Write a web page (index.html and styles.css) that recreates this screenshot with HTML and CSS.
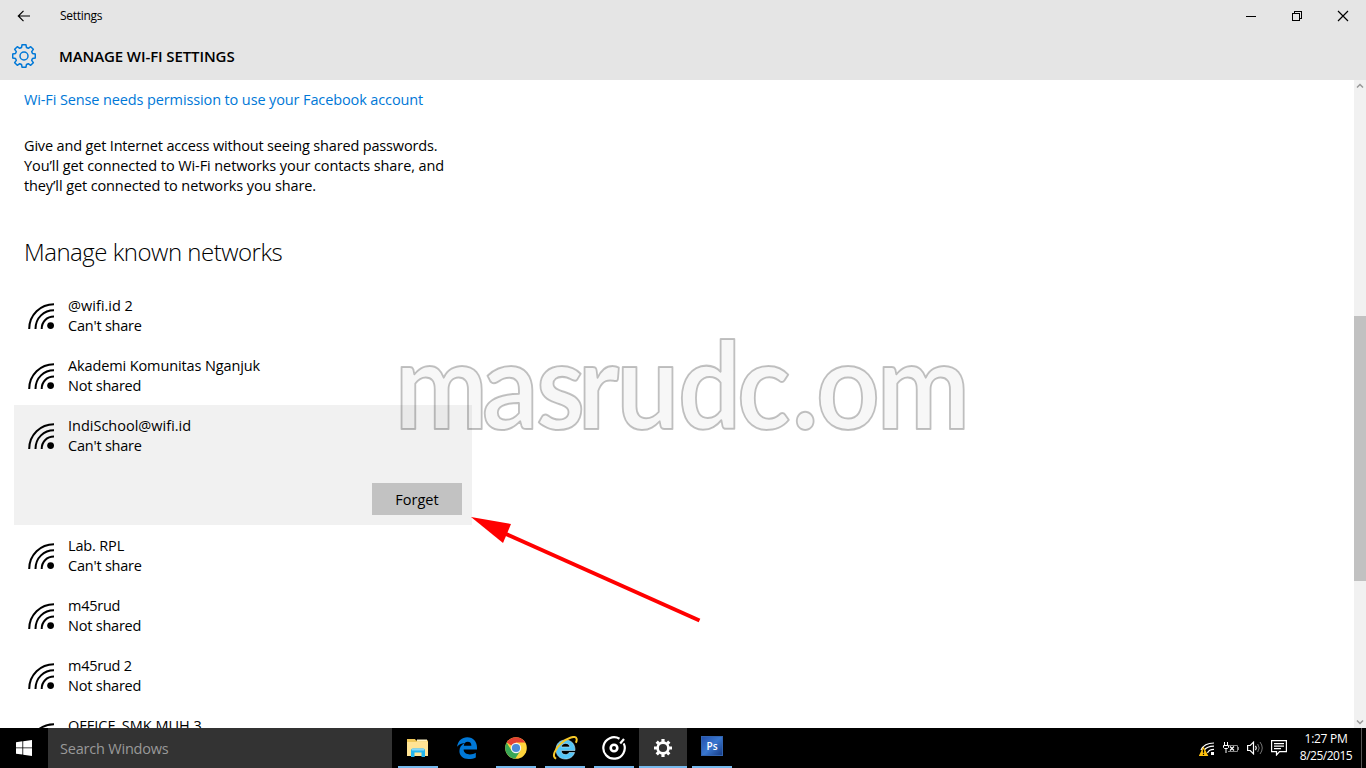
FILE: index.html
```html
<!DOCTYPE html>
<html lang="en">
<head>
<meta charset="utf-8">
<title>Settings</title>
<link rel="stylesheet" href="styles.css">
</head>
<body>
<svg width="0" height="0" class="defs">
  <defs>
    <symbol id="wifi" viewBox="0 0 28 28">
      <g fill="none" stroke="#000" stroke-width="2"><path d="M1.2 27C1.2 12.6 12.6 2.2 26 2.2M7.5 27C7.5 15.6 16 8.3 26 8.3M13.7 27C13.7 19.4 19 14.6 26 14.6"/></g>
      <circle cx="22.6" cy="23.6" r="3.4"/>
    </symbol>
  </defs>
</svg>
<div class="screen">
  <header class="header">
    <div class="titlebar">
      <svg class="back" width="14" height="12" viewBox="0 0 14 12"><path d="M6.5 .8 1.3 6l5.2 5.2M1.3 6H13" fill="none" stroke="#000" stroke-width="1.2"/></svg>
      <span class="app-name">Settings</span>
      <div class="controls">
        <svg width="46" height="32" shape-rendering="crispEdges"><path d="M18 16.5h10" stroke="#000"/></svg>
        <svg width="46" height="32" shape-rendering="crispEdges"><path d="M18.5 13.5h7v7h-7zM20.500 13v-1.500h7v7H26" fill="none" stroke="#000"/></svg>
        <svg width="46" height="32"><path d="m18 11 10 10M28 11 18 21" stroke="#000" stroke-width="1.2"/></svg>
      </div>
    </div>
    <div class="page-title">
      <svg width="24" height="24" viewBox="-12 -12 24 24"><g fill="none" stroke="#0078d7" stroke-width="1.500" stroke-linejoin="round"><circle r="4"/><path d="M-1.900-11.300H1.900L2.500-8.500 4.300-7.700 6.700-9.300 9.300-6.700 7.700-4.300 8.500-2.500 11.300-1.900V1.900L8.500 2.500 7.700 4.300 9.300 6.700 6.700 9.300 4.300 7.700 2.500 8.500 1.900 11.300H-1.900L-2.500 8.500-4.300 7.700-6.700 9.300-9.300 6.700-7.700 4.300-8.500 2.500-11.300 1.900V-1.900L-8.500-2.500-7.700-4.300-9.300-6.700-6.700-9.300-4.300-7.700-2.500-8.500Z"/></g></svg>
      <h1>MANAGE WI-FI SETTINGS</h1>
    </div>
  </header>
  <div class="body">
    <main class="content">
      <a class="link">Wi-Fi Sense needs permission to use your Facebook account</a>
      <p class="intro"><span class="l1">Give and get Internet access without seeing shared passwords.</span><br><span class="l2">You’ll get connected to Wi-Fi networks your contacts share, and</span><br><span class="l3">they’ll get connected to networks you share.</span></p>
      <h2>Manage known networks</h2>
      <ul class="networks">
        <li><svg class="wifi"><use href="#wifi"/></svg><div><div class="n1">@wifi.id 2</div><div class="status">Can't share</div></div></li>
        <li><svg class="wifi"><use href="#wifi"/></svg><div><div class="n2">Akademi Komunitas Nganjuk</div><div class="status">Not shared</div></div></li>
        <li class="selected"><svg class="wifi"><use href="#wifi"/></svg><div><div class="n3">IndiSchool@wifi.id</div><div class="status">Can't share</div></div><button class="forget">Forget</button></li>
        <li><svg class="wifi"><use href="#wifi"/></svg><div><div class="n4">Lab. RPL</div><div class="status">Can't share</div></div></li>
        <li><svg class="wifi"><use href="#wifi"/></svg><div><div class="n5">m45rud</div><div class="status">Not shared</div></div></li>
        <li><svg class="wifi"><use href="#wifi"/></svg><div><div class="n6">m45rud 2</div><div class="status">Not shared</div></div></li>
        <li><svg class="wifi"><use href="#wifi"/></svg><div><div class="n7">OFFICE_SMK MUH 3</div></div></li>
      </ul>
    </main>
    <div class="scrollbar">
      <svg width="12" height="12"><path d="m3 7.500 3-3 3 3" fill="none" stroke="#999" stroke-width="1.500"/></svg>
      <div class="thumb"></div>
      <svg class="down" width="12" height="12"><path d="m3 4.500 3 3 3-3" fill="none" stroke="#999" stroke-width="1.500"/></svg>
    </div>
  </div>
  <footer class="taskbar">
    <div class="start"><svg width="16" height="16" viewBox="0 0 16 16" fill="#fff"><path d="M0 2.200 6.400 1.300V7.500H0zM7.200 1.200 16 0V7.500H7.200zM0 8.300H6.400V14.600L0 13.700zM7.200 8.300H16V16L7.200 14.700z"/></svg></div>
    <div class="search">Search Windows</div>
    <div class="apps">
      <div class="app open"><svg width="24" height="24" viewBox="0 0 24 24"><path d="M1 3h8l1 1.500h12V20H1z" fill="#f0c85a"/><path d="M1 6h21v14H1z" fill="#ffe394"/><path d="M11 3.500h10v2H11z" fill="#fff3c4"/><path d="M5 21v-6.500q0-2 2-2h10q2 0 2 2V21h-3.500v-4.500h-7V21z" fill="#22b5ee"/><path d="M6 12.500h12v2H6z" fill="#85d7f7"/></svg></div>
      <div class="app"><svg width="24" height="24" viewBox="0 0 24 24"><path d="M2 10.800C3 4.600 7 1.200 12.200 1.200c6.200 0 9.800 4.600 9.800 10v2.300H8.600c.2 3.300 3 4.900 6.300 4.900 2.300 0 4.200-.6 5.900-1.600v4.600c-2 1.100-4.600 1.600-7.300 1.600-5.500 0-9.100-3.300-9.100-8 0-3.600 2-6.600 5.400-8.100C5.800 7.300 3.600 8.600 2 10.800zM8.800 9.700h7.600c0-2.400-1.200-3.900-3.700-3.900-2.200 0-3.600 1.600-3.900 3.900z" fill="#0078d7"/></svg></div>
      <div class="app open"><svg width="24" height="24" viewBox="-12 -12 24 24"><circle r="10.800" fill="#ffd43b"/><path d="M0 0-9.350-5.400A10.800 10.800 0 0 1 9.350-5.400H0z" fill="#e34133"/><path d="M-9.350-5.400A10.800 10.800 0 0 0-.8 10.770L4.500 2.600 0 5-4.500 2.600z" fill="#3aa757"/><circle r="5.200" fill="#f5f5f5"/><circle r="4.100" fill="#4a8bd8"/></svg></div>
      <div class="app open"><svg width="26" height="24" viewBox="0 0 26 24"><path d="M23 14.500H9.200c.2 2.600 1.800 4.100 4.200 4.100 1.700 0 2.900-.7 3.700-2.100h5.500c-1.400 4.200-4.800 6.500-9.200 6.500-5.600 0-9.400-3.800-9.400-9.400 0-5.700 3.900-9.600 9.400-9.600 6 0 9.800 4.100 9.600 10.500zM17.800 11c-.2-2.300-1.800-3.600-4.200-3.600S9.600 8.700 9.300 11z" fill="#54c5f6" stroke="#bdeaff" stroke-width=".6"/><path d="M4.200 22.600C-.8 21 3.200 12.500 9.500 7 15.500 1.800 23.500-1.200 24.600 2.800c.3 1.200-.1 2.700-.8 4" fill="none" stroke="#f6c829" stroke-width="2"/></svg></div>
      <div class="app open"><svg width="24" height="24" viewBox="-12 -12 24 24"><path d="M5.500-9.200A10.700 10.700 0 1 0 9.700-4.600M6.200-4.500 10-9" fill="none" stroke="#fff" stroke-width="2.200"/><circle r="3.300" fill="none" stroke="#fff" stroke-width="2.600"/></svg></div>
      <div class="app open active"><svg width="20" height="20" viewBox="-10 -10 20 20"><g stroke="#fff" fill="none"><circle r="5.400" stroke-width="2.600"/><path stroke-width="3.200" d="M0-6V-9M0 6V9M-6 0H-9M6 0H9M4.300-4.300 6.300-6.300M-4.300-4.300-6.300-6.300M4.300 4.300 6.300 6.300M-4.300 4.300-6.300 6.300"/></g></svg></div>
      <div class="app open ps-app"><div class="ps">Ps</div></div>
    </div>
    <div class="tray">
      <svg class="net" width="16" height="16" viewBox="0 0 16 16"><g fill="none" stroke="#fff" stroke-width="1.200"><path d="M2 9C4 4.500 8.500 2 15 2M5 9.500C7 6.500 10 5.200 15 5.200M8.500 12c1-2.500 3-3.600 6.500-3.600"/></g><path d="M12 11h3v3h-3z" fill="#fff"/><path d="M4.500 5.500 9.300 15H-.2z" fill="#ffc20e"/><path d="M4.500 8.500v3.300M4.500 12.800v1.300" stroke="#000" stroke-width="1.200"/></svg>
      <svg class="battery" width="16" height="12" viewBox="0 0 16 12"><path d="M6 3.500h8.500v6H5M15.500 5v3" fill="none" stroke="#888"/><path d="M1.500 0v3M4.500 0v3M.500 3.500h5v2l-1 1h-3l-1-1zM3 7v4" fill="none" stroke="#fff"/><path d="m7 4.500 4 4M11 4.500l-4 4" stroke="#fff" stroke-width="1.200"/></svg>
      <svg class="sound" width="17" height="14" viewBox="0 0 17 14"><path d="M.600 4.500h2.600L6.500 1.200v11.600L3.200 9.500H.6z" fill="none" stroke="#fff" stroke-width="1.200"/><path d="M8.500 4.800q1.600 2.200 0 4.400" fill="none" stroke="#fff" stroke-width="1.200"/><path d="M10.700 3q3 4 0 8M13 1q4.500 6 0 12" fill="none" stroke="#777"/></svg>
      <svg class="note" width="16" height="16" viewBox="0 0 16 16"><path d="M.600.600h14.800v11H8.500L5.500 15v-3.400H.6zM3 3.700h10M3 6.200h10M3 8.700h7" fill="none" stroke="#fff" stroke-width="1.200"/></svg>
      <div class="clock"><span class="time">1:27 PM</span><span class="date">8/25/2015</span></div>
      <div class="peek"></div>
    </div>
  </footer>
  <svg class="overlay" width="1366" height="768">
    <text class="watermark" transform="scale(.92 1)" x="429 524 582.500 628 670 737 801 861 887 953" y="429">masrudc.om</text>
    <path d="M699.500 620.500 506 534" stroke="#f00" stroke-width="4"/>
    <path d="m471 517 40 7-8 19z" fill="#f00"/>
  </svg>
</div>
</body>
</html>
```
FILE: styles.css
```css
* { box-sizing: border-box; }
body { margin: 0; font: 14.5px/20px "Open Sans", "Noto Sans", sans-serif; color: #000; background: #fff; overflow: hidden; }
svg { display: block; flex: none; }
.defs { position: absolute; }
.screen { position: relative; width: 1366px; height: 768px; display: flex; flex-direction: column; overflow: hidden; white-space: nowrap; }
.header { height: 80px; background: #e5e5e5; flex: none; }
.titlebar { height: 32px; display: flex; align-items: center; padding-left: 17px; }
.app-name { margin-left: 29px; font-size: 12px; letter-spacing: -.3px; }
.controls { display: flex; margin-left: auto; }
.page-title { height: 48px; display: flex; align-items: center; padding-left: 12px; gap: 23px; }
h1 { margin: 0; font-size: 15px; font-weight: 600; letter-spacing: -.1px; }
.body { height: 648px; display: flex; flex: none; overflow: hidden; }
.content { flex: 1; padding: 10px 0 0 24px; overflow: hidden; }
.link { display: block; color: #0078d7; letter-spacing: -.12px; }
.intro { margin: 26px 0 0; }
.l1 { letter-spacing: -.165px; }
.l2 { letter-spacing: -.09px; }
.l3 { letter-spacing: -.11px; }
h2 { margin: 40px 0 0; font-size: 24px; line-height: 32px; font-weight: 300; letter-spacing: -.5px; }
.networks { list-style: none; margin: 17px 0 0 -10px; padding: 0; width: 458px; }
.networks li { height: 60px; padding: 11px 10px 0 14px; display: flex; position: relative; }
.networks .selected { height: 120px; background: #f1f1f1; }
.wifi { width: 28px; height: 28px; margin: 6px 12px 0 0; }
.status { letter-spacing: -.22px; }
.n2 { letter-spacing: -.12px; }
.n4 { letter-spacing: -.15px; }
.n5, .n6 { letter-spacing: -.25px; }
.forget { margin: 67px 0 0 auto; width: 90px; height: 32px; border: 0; padding: 1px 0 0; background: #c2c2c2; font: inherit; }
.scrollbar { width: 12px; background: #f1f1f1; display: flex; flex-direction: column; }
.thumb { height: 265px; margin-top: 224px; background: #c1c1c1; }
.down { margin-top: auto; }
.taskbar { height: 40px; background: #000; display: flex; flex: none; color: #fff; }
.start { width: 48px; display: flex; align-items: center; justify-content: center; }
.search { width: 344px; background: #333; color: #999; line-height: 41px; padding-left: 12px; letter-spacing: -.2px; }
.apps { display: flex; gap: 1px; margin-left: 2px; }
.app { width: 48px; height: 40px; display: flex; align-items: center; justify-content: center; position: relative; }
.open { background: linear-gradient(#76b9ed, #76b9ed) 50% 100% / 40px 2px no-repeat; }
.active { background: linear-gradient(#76b9ed, #76b9ed) 50% 100% / 48px 2px no-repeat #333; }
.ps { width: 22px; height: 20px; margin-bottom: 4px; background: linear-gradient(135deg, #2451ae, #3977cf 50%, #173c85); border: 1px solid #3264b0; font: 600 10px/18px "Open Sans", sans-serif; text-align: center; }
.tray { margin-left: auto; display: flex; align-items: center; }
.net { margin-top: 2px; }
.battery { margin-left: 8px; }
.sound { margin-left: 8px; }
.note { margin-left: 7px; }
.clock { width: 74px; padding: 0 0 2px 4px; display: flex; flex-direction: column; align-items: center; font-size: 12px; line-height: 17px; letter-spacing: -.5px; }
.time { letter-spacing: -.3px; }
.peek { width: 5px; height: 40px; border-left: 1px solid #555; }
.overlay { position: absolute; left: 0; top: 0; pointer-events: none; }
.watermark { font: 700 121px Lato, "Open Sans", sans-serif; fill: rgba(0,0,0,.03); stroke: rgba(0,0,0,.24); stroke-width: 2px; stroke-linejoin: round; }
```
